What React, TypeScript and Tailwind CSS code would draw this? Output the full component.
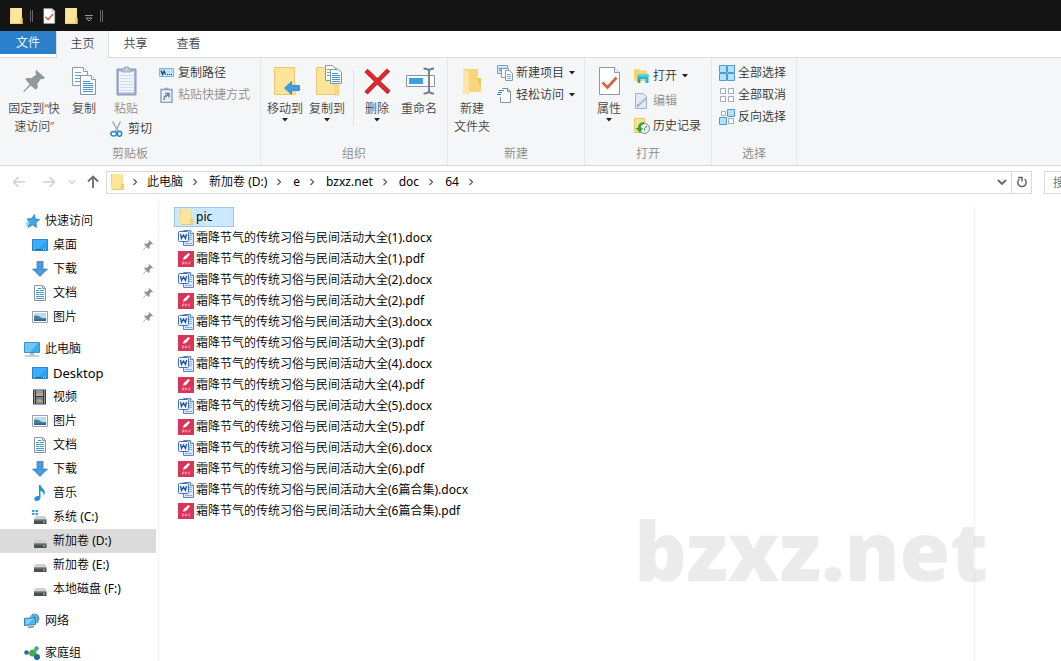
import { useState } from "react"
import type { ReactNode } from "react"

type IconProps = { className?: string }

function Folder({ className = "w-4 h-4" }: IconProps) {
  return (
    <svg viewBox="0 0 16 16" className={className} preserveAspectRatio="none">
      <path d="M2 0h12v16H2z" fill="#f8dd84" />
      <path d="M2 0h11v15H2z" fill="#fde69b" />
      <path d="M2 0h1v16h11v-1H3z" fill="#e9cb6c" />
      <path d="M12.500 10h2v6h-2z" fill="#f6d36c" stroke="#dcbb55" strokeWidth=".5" />
    </svg>
  )
}

function PinIcon({ className = "w-3 h-3" }: IconProps) {
  return (
    <svg viewBox="0 0 20 20" className={className} fill="currentColor">
      <path d="M12 0l8 7-2 1.500-1.500-.5-3.500 4.500.5 3.500-2 2-4.500-4-6 6-1 .5.5-1.500 5.500-6L2 8.500l2-1.500 3.500.5L12 4l-.8-2z" />
    </svg>
  )
}

function CopyIcon() {
  return (
    <svg viewBox="0 0 32 32" className="w-8 h-8" fill="#fff" stroke="#8a9aa8">
      <path d="M4.500 2.500h11l4 4v14h-15z" />
      <path d="M15.500 2.500v4h4" />
      <path d="M7 7.500h6M7 10.500h10M7 13.500h10M7 16.500h10" stroke="#5ba9d6" />
      <path d="M12.500 10.500h11l4 4v15h-15z" />
      <path d="M23.500 10.500v4h4" />
      <path d="M15 16.500h7M15 18.500h10M15 20.500h10M15 22.500h10M15 24.500h10M15 26.500h10" stroke="#3f97cd" />
    </svg>
  )
}

function PasteIcon() {
  return (
    <svg viewBox="0 0 32 32" className="w-8 h-8">
      <path d="M7 4h19v26H7z" fill="#a3b3d0" stroke="#8798b5" />
      <path d="M9 6.500h15v21H9z" fill="#f0f4fb" />
      <path d="M12 7V4h2.500V2h4v2H21v3z" fill="#c6cedb" stroke="#8c9ab0" strokeWidth=".8" />
      <path d="M10 10.500h13M10 13.500h13M10 16.500h13M10 19.500h13M10 22.500h13M10 25.500h13" stroke="#d4ddea" />
    </svg>
  )
}

function ScissorsIcon() {
  return (
    <svg viewBox="0 0 16 16" className="w-4 h-4" fill="none">
      <path d="M3.500 0.500L9.500 11M11.500 0.500L6.500 10.500" stroke="#98a6b2" strokeWidth="1.400" />
      <ellipse cx="4.700" cy="12.800" rx="2.800" ry="2.300" stroke="#2589c0" strokeWidth="1.500" />
      <ellipse cx="10.500" cy="12.800" rx="2.200" ry="2.500" stroke="#2589c0" strokeWidth="1.500" />
    </svg>
  )
}

function CopyPathIcon() {
  return (
    <svg viewBox="0 0 16 16" className="w-4 h-4">
      <path d="M.5 3.500h14v8H.5z" fill="#bfe2f8" stroke="#7db6dc" />
      <path d="M2 5.500l1.500 4L5 6l1.500 3.500" stroke="#1d3f5c" strokeWidth="1.200" fill="none" />
      <path d="M8 9.500h1M10 9.500h1M12 9.500h1" stroke="#1d3f5c" />
    </svg>
  )
}

function PasteShortcutIcon() {
  return (
    <svg viewBox="0 0 16 16" className="w-4 h-4">
      <path d="M2 2.500h11v13H2z" fill="#e8edf6" stroke="#8d9fbd" strokeWidth="1.400" />
      <path d="M5 3V1.500h1.500V.5h2v1H10V3z" fill="#8d9fbd" />
      <path d="M5 13c0-3 1-4.500 3-4.500M6 6.500h4v4M10 6.500L7 9.500" stroke="#6c83ad" strokeWidth="1.500" fill="none" />
    </svg>
  )
}

function MoveToIcon() {
  return (
    <svg viewBox="0 0 32 32" className="w-8 h-8">
      <path d="M5.500 2.500h20v27h-20z" fill="#fee49a" stroke="#e8c772" />
      <path d="M23 19h4v11h-4z" fill="#fbdc85" />
      <path d="M15.500 23l7-6.500v4h8v5h-8v4z" fill="#3f9ee0" stroke="#2b83c2" strokeWidth=".8" />
    </svg>
  )
}

function CopyToIcon() {
  return (
    <svg viewBox="0 0 32 32" className="w-8 h-8">
      <path d="M5.500 2.500h20v27h-20z" fill="#fee49a" stroke="#e8c772" />
      <path d="M24 20h4v10h-4z" fill="#fbdc85" stroke="#e8c772" strokeWidth=".6" />
      <path d="M14.500.5h7l3 3v12h-10z" fill="#fff" stroke="#8b98a3" />
      <path d="M16 4.500h5M16 7.500h4M16 10.500h4" stroke="#5ba9d6" />
      <path d="M19.500 4.500h8l3 3v11h-11z" fill="#fff" stroke="#8b98a3" />
      <path d="M21 8.500h6M21 10.500h8M21 12.500h8M21 14.500h8M21 16.500h8" stroke="#3f97cd" />
    </svg>
  )
}

function DeleteIcon() {
  return (
    <svg viewBox="0 0 32 32" className="w-8 h-8">
      <path d="M5 5.500l23 22M27.500 5L5 28" stroke="#c9202b" strokeWidth="4.500" />
      <path d="M6 6.500l21 20M26.500 6L6 27" stroke="#e12a32" strokeWidth="2.500" />
    </svg>
  )
}

function RenameIcon() {
  return (
    <svg viewBox="0 0 32 32" className="w-8 h-8" fill="none">
      <path d="M3.500 10.500h28v11h-28z" fill="#fff" stroke="#8195a5" />
      <path d="M6 13h14v6H6z" fill="#3c9ee5" />
      <path d="M26 5v22M20.500 3.500c3 0 5 .5 5.500 2.500.5-2 2.500-2.500 5-2.500M20.500 28.500c3 0 5-.5 5.500-2.500.5 2 2.500 2.500 5 2.500" stroke="#717b84" strokeWidth="1.800" />
    </svg>
  )
}

function NewFolderIcon() {
  return (
    <svg viewBox="0 0 32 32" className="w-8 h-8">
      <path d="M7 4h15v9h3v14H11L7 29z" fill="#f7d67b" />
      <path d="M7 4l6 3v23l-6-3z" fill="#fbe6a8" />
      <path d="M22 13v5l3 2v-7z" fill="#edc45c" />
    </svg>
  )
}

function NewItemIcon() {
  return (
    <svg viewBox="0 0 16 16" className="w-4 h-4" fill="#fff" stroke="#8797a5">
      <path d="M.5.5h10v8H.5z" fill="#d5e9f8" stroke="#6fa3c7" />
      <path d="M2 3.500h3M2 5.500h3" stroke="#3b84b5" />
      <path d="M4.500 3.500h7v9h-7z" />
      <path d="M8.500 5.500h4l3 3v7h-7z" />
      <path d="M10 9.500h4M10 11.500h4M10 13.500h4" stroke="#5a9dc8" strokeWidth=".8" />
    </svg>
  )
}

function EasyAccessIcon() {
  return (
    <svg viewBox="0 0 16 16" className="w-4 h-4" fill="none">
      <path d="M3.500 1.500h7l3 3v11h-10z" fill="#fff" />
      <path d="M5 1.500h5.500l3 3v11h-10V10M10.500 1.500v3h3" stroke="#84919c" />
      <path d="M2 3.500h5M1 5.500h4M0 7.500h4" stroke="#2d80b9" />
    </svg>
  )
}

function PropertiesIcon({ className = "w-8 h-8" }: IconProps) {
  return (
    <svg viewBox="0 0 32 32" className={className}>
      <path d="M6.500 2.500h15l5 5v22h-20z" fill="#fff" stroke="#9299a1" />
      <path d="M21.500 2.500v5h5" fill="#eef1f5" stroke="#9299a1" />
      <path d="M9.500 17.500l5 5 9-10" fill="none" stroke="#d4683c" strokeWidth="2.800" />
    </svg>
  )
}

function OpenIcon() {
  return (
    <svg viewBox="0 0 16 16" className="w-4 h-4">
      <path d="M0 1h5l1 1.500h7V13H0z" fill="#f6d574" />
      <path d="M3.500 6.500h11V15h-3v-4h-5v4h-3z" fill="#27b8d4" />
      <path d="M4 6h10l2 2.500H3z" fill="#62d1e2" />
      <path d="M4 11h2v4H4z" fill="#4b9f4c" />
    </svg>
  )
}

function EditIcon() {
  return (
    <svg viewBox="0 0 16 16" className="w-4 h-4">
      <path d="M1.500.5h8l3 3v12h-11z" fill="#e2e9f5" stroke="#a1b1cb" />
      <path d="M4 12.500l9-8" stroke="#a9bbdb" strokeWidth="2" />
      <path d="M2.500 14l3-1-2-2z" fill="#8096bf" />
    </svg>
  )
}

function HistoryIcon() {
  return (
    <svg viewBox="0 0 16 16" className="w-4 h-4">
      <path d="M.5.500h10v14H.5z" fill="#fbe391" stroke="#e5c762" />
      <circle cx="10.500" cy="10.500" r="5" fill="#e8f0ee" stroke="#7d8b88" />
      <path d="M10.500 10.500l2.500-2.500M10.500 10.500v2" fill="none" stroke="#526a66" />
      <path d="M10 4C5 4.500 3.500 8 4 10H1.500l4.500 5 3-5H7C6.800 8 7.500 6.500 10 6z" fill="#37a343" />
    </svg>
  )
}

function SelectAllIcon() {
  return (
    <svg viewBox="0 0 16 16" className="w-4 h-4" fill="#b5e0fb" stroke="#4a9ed5">
      <path d="M.5.500h7v7h-7zM8.500.500h7v7h-7zM.5 8.500h7v7h-7zM8.500 8.500h7v7h-7z" />
    </svg>
  )
}

function SelectNoneIcon() {
  return (
    <svg viewBox="0 0 16 16" className="w-4 h-4" fill="#fff" stroke="#a5adb3">
      <path d="M1.500 1.500h5v5h-5zM9.500 1.500h5v5h-5zM1.500 9.500h5v5h-5zM9.500 9.500h5v5h-5z" />
    </svg>
  )
}

function InvertIcon() {
  return (
    <svg viewBox="0 0 16 16" className="w-4 h-4">
      <path d="M2.500 2.500h4v4h-4zM9.500 9.500h5v5h-5z" fill="#fff" stroke="#a5adb3" />
      <path d="M8.500.500h7v7h-7zM.5 8.500h7v7h-7z" fill="#b5e0fb" stroke="#4a9ed5" />
    </svg>
  )
}

function StarIcon() {
  return (
    <svg viewBox="0 0 16 16" className="w-4 h-4">
      <path d="M10.500 1.500l.7 4.300 4.300.7-3.500 3 .5 5-4-2.500-4.500 2.500 1.500-5L3 6l4.500-.5z" fill="#3da5e8" stroke="#247ab6" strokeWidth=".7" />
      <path d="M2 13l4-3M2 10.500l3-1.500M3 7.500h2" stroke="#77c5f2" strokeWidth="1.200" />
    </svg>
  )
}

function DesktopIcon() {
  return (
    <svg viewBox="0 0 16 16" className="w-4 h-4">
      <path d="M.5 2.500h15v11H.5z" fill="#27a4f6" stroke="#2186cf" />
      <path d="M1 3h14L6 12H1z" fill="#3aaefa" />
      <path d="M1 12.500h14" stroke="#1470b3" />
      <path d="M2 12.500h1M11 12.500h1M13 12.500h1" stroke="#fff" />
    </svg>
  )
}

function DownloadIcon() {
  return (
    <svg viewBox="0 0 16 16" className="w-4 h-4">
      <path d="M5 .5h6v7.500h4.500L8 15.500.5 8H5z" fill="#4c99dc" stroke="#2f77b8" strokeWidth=".7" />
    </svg>
  )
}

function DocumentIcon() {
  return (
    <svg viewBox="0 0 16 16" className="w-4 h-4">
      <path d="M2.500.500h8l3 3v12h-11z" fill="#fff" stroke="#8a969f" />
      <path d="M10.500.500v3h3" fill="none" stroke="#8a969f" />
      <path d="M6 3.500h3M4 5.500h3M8 5.500h4M4 7.500h8M4 9.500h3M8 9.500h4M4 11.500h8M4 13.500h8" stroke="#469bc5" />
    </svg>
  )
}

function PictureIcon() {
  return (
    <svg viewBox="0 0 16 16" className="w-4 h-4">
      <path d="M.5 2.500h15v11H.5z" fill="#fff" stroke="#98a2aa" />
      <path d="M2 4h12v8H2z" fill="#b9def4" />
      <path d="M2 7c3-1 5 0 7 1.500 2 1 4 .5 5 .5v3H2z" fill="#4d7f9c" />
      <path d="M2 10.500h12V12H2z" fill="#30658a" />
    </svg>
  )
}

function ComputerIcon() {
  return (
    <svg viewBox="0 0 16 16" className="w-4 h-4">
      <path d="M.5 1.500h15v10H.5z" fill="#3cadf0" stroke="#4b8db5" />
      <path d="M1 2h13L6 11H1z" fill="#6cc8fa" />
      <path d="M6 12h4v2H6z" fill="#b2bec6" />
      <path d="M1 15h14" stroke="#8da1af" />
    </svg>
  )
}

function VideoIcon() {
  return (
    <svg viewBox="0 0 16 16" className="w-4 h-4">
      <path d="M1 .5h13v15H1z" fill="#333a45" />
      <path d="M4 1h7v6H4z" fill="#8294bf" />
      <path d="M4 8h7v7H4z" fill="#6f80aa" />
      <path d="M4 5l3-1 2 1 2-2v4H4zM4 13l3-3 4 2v1H4z" fill="#c7ae48" />
      <path d="M2.500 1.500v14M12.500 1.500v14" stroke="#f1f1f1" strokeDasharray="1 1" />
    </svg>
  )
}

function MusicIcon() {
  return (
    <svg viewBox="0 0 16 16" className="w-4 h-4">
      <path d="M7 0h1.500c.3 3 4.500 4 4.300 7.500 0 1.500-.8 2.500-1.300 3 .5-3-1-4-3-4.800V12.500C8.500 14.500 6.500 16 4.500 16S2 14.500 2.500 13 5 11 7 11z" fill="#1d93d6" />
    </svg>
  )
}

function DriveIcon({ system = false }: { system?: boolean }) {
  return (
    <svg viewBox="0 0 16 16" className="w-4 h-4">
      <path d="M3.500 7h9.500l1.500 3.500H2z" fill="#ced1d2" />
      <path d="M2 10.500h12.500V15H2z" fill="#4b5054" />
      <path d="M2 10.500h12.500v1H2z" fill="#868b8e" />
      <path d="M11 12.500h2v1h-2z" fill="#a6eeaf" />
      {system && <path d="M0 1h2.500v2H0zM3.500 1H6v2H3.500zM0 4h2.500v2H0zM3.500 4H6v2H3.500z" fill="#25a5db" />}
    </svg>
  )
}

function NetworkIcon() {
  return (
    <svg viewBox="0 0 16 16" className="w-4 h-4">
      <circle cx="10.500" cy="5.500" r="5" fill="#7eb9dc" />
      <path d="M8 1.500c2 0 3 2 2 4M12 1c2 2 3 5 1 9" stroke="#2d78ad" fill="none" />
      <path d="M.5 5.500l11-1v7l-11 1z" fill="#4eb3ef" stroke="#397fab" />
      <path d="M1.500 6.500l8-1-6 6h-2z" fill="#86d0f8" />
      <path d="M4 14.500l6-1" stroke="#6a91aa" strokeWidth="1.500" />
    </svg>
  )
}

function HomegroupIcon() {
  return (
    <svg viewBox="0 0 16 16" className="w-4 h-4">
      <path d="M2.500 8H8l4-5v9z" fill="none" stroke="#7fb8a0" />
      <circle cx="2.500" cy="7.500" r="2.300" fill="#2a69a6" />
      <circle cx="12.500" cy="3.500" r="2.200" fill="#3aa0c2" />
      <circle cx="8.800" cy="8" r="3.500" fill="#48ad45" />
      <circle cx="13" cy="12" r="3" fill="#2467a5" />
    </svg>
  )
}

function WordIcon() {
  return (
    <svg viewBox="0 0 16 16" className="w-4 h-4">
      <path d="M5.500.5h7l3 3v12h-10z" fill="#dbe7fa" stroke="#5d83c0" />
      <path d="M12.500.5v3h3" fill="#fff" stroke="#5d83c0" />
      <path d="M11 5.500h3M11 7.500h3M11 9.500h3M7 13.500h7" stroke="#8fb0e2" />
      <rect x=".5" y="1.500" width="10" height="10" rx="1" fill="#f1f6ff" stroke="#4470b5" />
      <path d="M2.500 4l1 4.500L5.500 5l2 3.500 1-4.500" fill="none" stroke="#1d4d9f" strokeWidth="1.300" />
    </svg>
  )
}

function PdfIcon() {
  return (
    <svg viewBox="0 0 16 16" className="w-4 h-4">
      <path d="M0 0h16v16H0z" fill="#d9345a" />
      <path d="M5 9l.8-3L10.500 2l1.500 1.200L8.500 7.500z" fill="#fff" />
      <path d="M4.500 13.500v-2.500h1.500v1.500H4.500M7.500 11v2h1l.5-1-.5-1zM11 13.500v-2.500h1.500M11 12.300h1" fill="none" stroke="#f2a5b5" strokeWidth=".8" />
    </svg>
  )
}

function Caret() {
  return (
    <svg viewBox="0 0 6 4" className="w-[6px] h-[4px] shrink-0">
      <path d="M0 0h6L3 3.500z" fill="#222" />
    </svg>
  )
}

function Chevron({ className = "" }: IconProps) {
  return (
    <svg viewBox="0 0 8 8" className={`w-2 h-2 shrink-0 ${className}`} fill="none" stroke="currentColor" strokeWidth="1.400">
      <path d="M2.500 1l3 3-3 3" />
    </svg>
  )
}

// Latin runs get regular weight, Chinese keeps the lighter one from the root
function Name({ text }: { text: string }) {
  return (
    <span className="whitespace-pre">
      {text.split(/([ -~]+)/).map((part, i) =>
        i % 2 ? <span key={i} className="font-normal">{part}</span> : part
      )}
    </span>
  )
}

type BigButtonProps = { icon: ReactNode; lines: string[]; caret?: boolean; disabled?: boolean; className?: string }

function BigButton({ icon, lines, caret, disabled, className = "w-[42px]" }: BigButtonProps) {
  return (
    <button disabled={disabled} className={`flex flex-col items-center pt-[7px] leading-[18px] whitespace-nowrap ${disabled ? "text-[#8d8d8d]" : "text-[#444]"} ${className}`}>
      <span className="flex h-8 w-8 items-center justify-center">{icon}</span>
      <span className="mt-[3px]">
        {lines.map((line) => (
          <span key={line} className="block">{line}</span>
        ))}
      </span>
      {caret && <Caret />}
    </button>
  )
}

type SmallButtonProps = { icon: ReactNode; label: string; caret?: boolean; disabled?: boolean; className?: string }

function SmallButton({ icon, label, caret, disabled, className = "h-[22px]" }: SmallButtonProps) {
  return (
    <button disabled={disabled} className={`flex items-center gap-[3px] whitespace-nowrap ${disabled ? "text-[#8d8d8d]" : "text-[#333]"} ${className}`}>
      {icon}
      <span>{label}</span>
      {caret && <span className="pl-[2px]"><Caret /></span>}
    </button>
  )
}

function Group({ label, className, children }: { label: string; className: string; children: ReactNode }) {
  return (
    <section aria-label={label} className={`flex shrink-0 flex-col border-r border-[#e4e6e8] ${className}`}>
      <div className="flex flex-1 items-start">{children}</div>
      <div className="pb-[3px] text-center leading-4 text-[#8a8a8a]">{label}</div>
    </section>
  )
}

const tabs = ["主页", "共享", "查看"]

const crumbs = ["此电脑", "新加卷 (D:)", "e", "bzxz.net", "doc", "64"]

type NavItem = { id: string; label: string; icon: ReactNode; pinned?: boolean; className?: string }
type NavGroup = { label: string; icon: ReactNode; items: NavItem[] }

const navGroups: NavGroup[] = [
  {
    label: "快速访问",
    icon: <StarIcon />,
    items: [
      { id: "q-desktop", label: "桌面", icon: <DesktopIcon />, pinned: true },
      { id: "q-download", label: "下载", icon: <DownloadIcon />, pinned: true },
      { id: "q-doc", label: "文档", icon: <DocumentIcon />, pinned: true },
      { id: "q-pic", label: "图片", icon: <PictureIcon />, pinned: true },
    ],
  },
  {
    label: "此电脑",
    icon: <ComputerIcon />,
    items: [
      { id: "desktop", label: "Desktop", icon: <DesktopIcon />, className: "text-[13px]" },
      { id: "video", label: "视频", icon: <VideoIcon /> },
      { id: "pic", label: "图片", icon: <PictureIcon /> },
      { id: "doc", label: "文档", icon: <DocumentIcon /> },
      { id: "download", label: "下载", icon: <DownloadIcon /> },
      { id: "music", label: "音乐", icon: <MusicIcon /> },
      { id: "c", label: "系统 (C:)", icon: <DriveIcon system /> },
      { id: "d", label: "新加卷 (D:)", icon: <DriveIcon /> },
      { id: "e", label: "新加卷 (E:)", icon: <DriveIcon /> },
      { id: "f", label: "本地磁盘 (F:)", icon: <DriveIcon /> },
    ],
  },
  { label: "网络", icon: <NetworkIcon />, items: [] },
  { label: "家庭组", icon: <HomegroupIcon />, items: [] },
]

const title = "霜降节气的传统习俗与民间活动大全"

const files = ["1", "2", "3", "4", "5", "6", "6篇合集"].flatMap((n) => [
  `${title}(${n}).docx`,
  `${title}(${n}).pdf`,
])

function TitleBar() {
  return (
    <header className="flex h-[31px] shrink-0 items-center bg-[#141414] pl-2">
      <Folder />
      <span className="ml-[6px] h-3 w-[3px] border-x border-[#666]" />
      <button aria-label="属性" className="ml-2">
        <PropertiesIcon className="h-4 w-4 scale-110" />
      </button>
      <button aria-label="新建文件夹" className="ml-[6px]">
        <Folder />
      </button>
      <button aria-label="自定义快速访问工具栏" className="ml-[6px]">
        <svg viewBox="0 0 8 8" className="mt-1 h-2 w-2" fill="none" stroke="#999">
          <path d="M0 1.500h8M1 4l3 3 3-3z" />
        </svg>
      </button>
      <span className="ml-[7px] h-3 w-[3px] border-x border-[#666]" />
    </header>
  )
}

function Ribbon() {
  return (
    <div className="flex h-[108px] shrink-0 overflow-hidden border-b border-[#d8dadc] bg-[#f5f6f7]">
      <Group label="剪贴板" className="w-[261px]">
        <BigButton icon={<PinIcon className="h-[22px] w-[22px] text-[#8d989f]" />} lines={["固定到“快", "速访问”"]} className="ml-1 w-[60px]" />
        <BigButton icon={<CopyIcon />} lines={["复制"]} className="w-10" />
        <div className="w-[55px]">
          <BigButton icon={<PasteIcon />} lines={["粘贴"]} disabled className="w-11" />
          <div className="pl-[5px]"><SmallButton icon={<ScissorsIcon />} label="剪切" /></div>
        </div>
        <div className="pt-1">
          <SmallButton icon={<CopyPathIcon />} label="复制路径" />
          <SmallButton icon={<PasteShortcutIcon />} label="粘贴快捷方式" disabled />
        </div>
      </Group>
      <Group label="组织" className="w-[187px]">
        <BigButton icon={<MoveToIcon />} lines={["移动到"]} caret className="ml-[3px] w-[42px]" />
        <BigButton icon={<CopyToIcon />} lines={["复制到"]} caret />
        <span className="mr-[2px] ml-[5px] mt-3 h-14 w-px bg-[#e2e4e6]" />
        <BigButton icon={<DeleteIcon />} lines={["删除"]} caret />
        <BigButton icon={<RenameIcon />} lines={["重命名"]} />
      </Group>
      <Group label="新建" className="w-[137px]">
        <BigButton icon={<NewFolderIcon />} lines={["新建", "文件夹"]} className="ml-1 w-10" />
        <div className="pt-1 pl-[5px]">
          <SmallButton icon={<NewItemIcon />} label="新建项目" caret />
          <SmallButton icon={<EasyAccessIcon />} label="轻松访问" caret />
        </div>
      </Group>
      <Group label="打开" className="w-[127px]">
        <BigButton icon={<PropertiesIcon />} lines={["属性"]} caret className="ml-1 w-10" />
        <div className="pt-[5px] pl-[5px]">
          <SmallButton icon={<OpenIcon />} label="打开" caret className="h-[25px]" />
          <SmallButton icon={<EditIcon />} label="编辑" disabled className="h-[25px]" />
          <SmallButton icon={<HistoryIcon />} label="历史记录" className="h-[25px]" />
        </div>
      </Group>
      <Group label="选择" className="w-[85px]">
        <div className="pt-1 pl-[7px]">
          <SmallButton icon={<SelectAllIcon />} label="全部选择" />
          <SmallButton icon={<SelectNoneIcon />} label="全部取消" />
          <SmallButton icon={<InvertIcon />} label="反向选择" />
        </div>
      </Group>
    </div>
  )
}

function AddressBar() {
  return (
    <div className="flex h-8 shrink-0 items-center overflow-hidden text-black">
      <div className="flex w-[106px] shrink-0 items-center text-[#d0d0d0]">
        <button aria-label="后退" className="ml-3">
          <svg viewBox="0 0 14 14" className="h-[14px] w-[14px]" fill="none" stroke="currentColor" strokeWidth="1.600">
            <path d="M13 7H1.500M6.500 2l-5 5 5 5" />
          </svg>
        </button>
        <button aria-label="前进" className="ml-4">
          <svg viewBox="0 0 14 14" className="h-[14px] w-[14px]" fill="none" stroke="currentColor" strokeWidth="1.600">
            <path d="M1 7h11.500M7.500 2l5 5-5 5" />
          </svg>
        </button>
        <button aria-label="最近浏览的位置" className="ml-3">
          <Chevron className="rotate-90" />
        </button>
        <button aria-label="上移" className="ml-[10px] text-[#6d6d6d]">
          <svg viewBox="0 0 14 14" className="h-[14px] w-[14px]" fill="none" stroke="currentColor" strokeWidth="1.800">
            <path d="M7 13V1.500M2 6.500l5-5 5 5" />
          </svg>
        </button>
      </div>
      <nav aria-label="地址" className="flex h-[23px] min-w-0 flex-1 items-center border border-[#d9d9d9] pl-[2px]">
        <Folder />
        <Chevron className="mx-[6px] text-[#666]" />
        {crumbs.map((crumb) => (
          <span key={crumb} className="flex items-center">
            <button className="ml-[2px]"><Name text={crumb} /></button>
            <Chevron className="mx-2 text-[#666]" />
          </span>
        ))}
        <button aria-label="以前的位置" className="ml-auto mr-1">
          <svg viewBox="0 0 10 10" className="h-[10px] w-[10px]" fill="none" stroke="#666" strokeWidth="1.800">
            <path d="M1 3l4 4 4-4" />
          </svg>
        </button>
        <button aria-label="刷新" className="flex h-full w-5 items-center justify-center border-l border-[#d9d9d9]">
          <svg viewBox="0 0 12 12" className="h-3 w-3" fill="none" stroke="#666" strokeWidth="1.500">
            <path d="M8.500 3A4.200 4.200 0 1 1 3.500 3M2 1.500h4v4" />
          </svg>
        </button>
      </nav>
      <div className="ml-3 w-[17px] shrink-0">
        <input type="search" aria-label="搜索" placeholder="搜索" className="h-[23px] w-44 border border-[#d9d9d9] pl-2 placeholder:text-[#6d6d6d]" />
      </div>
    </div>
  )
}

function Sidebar() {
  return (
    <nav aria-label="导航窗格" className="flex w-[159px] shrink-0 flex-col gap-2 overflow-hidden border-r border-[#f2f2f2] pt-[11px] text-black">
      {navGroups.map((group) => (
        <div key={group.label} className="shrink-0">
          <a href="#" className="flex h-6 items-center gap-[5px] pl-6">
            {group.icon}
            {group.label}
          </a>
          {group.items.map((item) => (
            <a
              key={item.id}
              href="#"
              className={`mr-[2px] flex h-6 items-center gap-[5px] pl-8 ${item.id === "d" ? "bg-[#dbdbdb]" : ""} ${item.className ?? ""}`}
            >
              {item.icon}
              <Name text={item.label} />
              {item.pinned && <PinIcon className="mr-[3px] ml-auto h-[10px] w-[10px] text-[#8c969e]" />}
            </a>
          ))}
        </div>
      ))}
    </nav>
  )
}

export default function App() {
  const [activeTab, setActiveTab] = useState("主页")

  return (
    <div className="flex h-screen flex-col overflow-hidden bg-white font-['Noto_Sans','Noto_Sans_CJK_SC',sans-serif] text-[12px] leading-[18px] font-[350]">
      <TitleBar />
      <div className="flex h-[27px] shrink-0 border-b border-[#dadbdc] text-[#444]">
        <button className="h-[23px] w-14 bg-[#2b7fcb] pt-px text-white">文件</button>
        {tabs.map((tab) => (
          <button
            key={tab}
            onClick={() => setActiveTab(tab)}
            className={`h-[27px] w-[53px] border-x pb-[2px] ${activeTab === tab ? "border-[#dadbdc] bg-[#f5f6f7]" : "border-transparent"}`}
          >
            {tab}
          </button>
        ))}
      </div>
      <Ribbon />
      <AddressBar />
      <div className="relative flex min-h-0 flex-1">
        <Sidebar />
        <main className="mt-2 flex-1 overflow-hidden border-r border-[#f2f2f2] pl-[15px] pt-px text-black">
          <ul>
            <li className="flex h-5 w-[60px] items-center gap-[2px] border border-[#99c9ef] bg-[#cce8ff] pl-[3px]">
              <Folder />
              <a href="#"><Name text="pic" /></a>
            </li>
            {files.map((name) => (
              <li key={name} className="flex h-[21px] items-center gap-[2px] pl-1">
                {name.endsWith(".pdf") ? <PdfIcon /> : <WordIcon />}
                <a href="#"><Name text={name} /></a>
              </li>
            ))}
          </ul>
        </main>
        <aside className="w-[86px] shrink-0" />
        <div className="pointer-events-none absolute right-[73px] bottom-[66px] text-[82px] leading-[92px] font-black text-black/8">bzxz.net</div>
      </div>
    </div>
  )
}
